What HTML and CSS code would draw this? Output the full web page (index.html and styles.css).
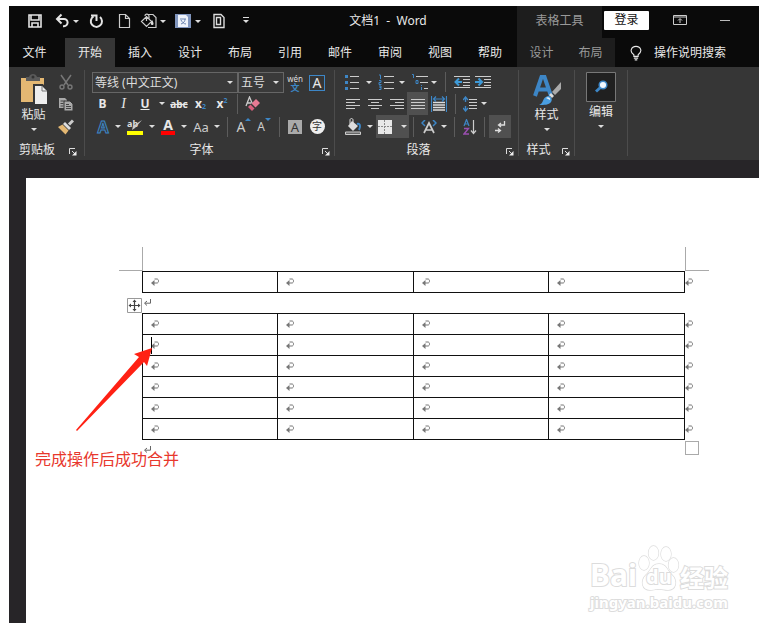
FILE: index.html
```html
<!DOCTYPE html>
<html lang="zh-CN">
<head>
<meta charset="utf-8">
<title>文档1 - Word</title>
<link rel="stylesheet" href="styles.css">
</head>
<body>
<svg class="defs" aria-hidden="true">
  <symbol id="cell-mark" viewBox="0 0 9 9"><path d="M3.500 1h2.500c2 0 2 4 0 4H2" fill="none" stroke="#777"/><path d="M0 5l3.500-3v6z" fill="#777"/></symbol>
  <symbol id="para-mark" viewBox="0 0 9 9"><path d="M7.500 1v4.200H2M4 3L1.500 5.200 4 7.500" fill="none" stroke="#666"/></symbol>
  <symbol id="launch" viewBox="0 0 8 8"><path d="M.5 6V.5H6M3 3l3 3" fill="none" stroke="#ddd"/><path d="M7.500 3v4.500H3z" fill="#eee"/></symbol>
</svg>
<div class="window">
  <header class="titlebar">
    <div class="quick">
      <button aria-label="保存"><svg width="18" height="18" viewBox="0 0 18 18"><path d="M3 3h12v12H3zM5 3v5h8V3M6 15v-4h6v4" fill="none" stroke="#e4e4e4" stroke-width="1.600"/></svg></button>
      <button aria-label="撤消"><svg width="18" height="18" viewBox="0 0 18 18"><path d="M5 7h7a3.600 3.600 0 0 1 0 7.200H11M9.500 2.500L5 7l4.500 4.500" fill="none" stroke="#e4e4e4" stroke-width="2"/></svg><i class="caret"></i></button>
      <button aria-label="重复"><svg width="18" height="18" viewBox="0 0 18 18"><path d="M6.500 4.500A5.600 5.600 0 1 0 13 5M4 3.500h5.500V9" fill="none" stroke="#e4e4e4" stroke-width="2"/></svg></button>
      <button aria-label="新建"><svg width="18" height="18" viewBox="0 0 18 18"><path d="M6.500 2.500h6l4 4v9h-10zM12.500 2.500v4h4" fill="none" stroke="#ccc" stroke-width="1.200"/></svg></button>
      <button aria-label="底纹"><svg width="18" height="18" viewBox="0 0 18 18"><path d="M9 2.500h5l3 3v10H9M2.500 9.500l5-5 5 5-5 5zM7.500 4v5M6 4c0-3 4-2 4 0v3" fill="none" stroke="#ccc" stroke-width="1.200"/><path d="M13 8c2 3 2 5 0 5s-1-3 0-5z" fill="#ddd"/></svg><i class="caret"></i></button>
      <button aria-label="翻译"><svg width="18" height="18" viewBox="0 0 18 18"><path d="M1 2h16v14H1z" fill="#8095bd"/><path d="M4 3h8l2 2v10H4z" fill="#eef2fa"/><path d="M6 7h6M7 12c3-1 4-3 4-5M7 8c1 2 3 4 5 4" fill="none" stroke="#6b84b0"/></svg><i class="caret"></i></button>
      <button aria-label="页面"><svg width="18" height="18" viewBox="0 0 18 18"><path d="M5 2.500h7l3 3v10H5zM7.500 5.500h4v7h-4z" fill="none" stroke="#ddd" stroke-width="1.400"/></svg></button>
      <button class="more" aria-label="自定义快速访问工具栏"><i class="caret barred"></i></button>
    </div>
    <h1>文档1 &nbsp;-&nbsp; Word</h1>
    <div class="context-title">表格工具</div>
    <div class="controls">
      <button class="login">登录</button>
      <button aria-label="功能区显示选项"><svg width="14" height="12" viewBox="0 0 14 12"><path d="M.5 1.500h13v9H.5zM.5 3h13M7 9V5M5 6.500l2-2 2 2" fill="none" stroke="#ccc"/></svg></button>
      <button class="minimize" aria-label="最小化"><svg width="12" height="12" viewBox="0 0 12 12"><path d="M1 6.500h10" stroke="#bbb"/></svg></button>
    </div>
  </header>
  <nav class="tabs">
    <button class="file">文件</button>
    <button class="active">开始</button>
    <button>插入</button>
    <button>设计</button>
    <button>布局</button>
    <button>引用</button>
    <button>邮件</button>
    <button>审阅</button>
    <button>视图</button>
    <button>帮助</button>
    <div class="context-tabs"><button>设计</button><button>布局</button></div>
    <button class="tell"><svg width="12" height="16" viewBox="0 0 14 18"><path d="M4.500 13v-2C1 8.500 1 6.500 1.500 5c1.500-5 9.500-5 11 0 .5 1.500 0 3.500-3 6v2zM4.500 15h5M5.500 17h3" fill="none" stroke="#e8e8e8" stroke-width="1.300"/></svg>操作说明搜索</button>
  </nav>

  <section class="ribbon" aria-label="功能区">
    <div class="group clip">
      <div class="clip-body">
        <button class="big">
          <svg width="28" height="31" viewBox="0 0 28 31"><path d="M1 4h23v24H1z" fill="#e4b873"/><path d="M6 3h3c1-4 7-4 8 0h3v4H6z" fill="#5a5a5a"/><circle cx="13" cy="3" r="1.500" fill="#333"/><path d="M13 10h10l5 6v15H13z" fill="#363636"/><path d="M15 12h7l5 5v13H15z" fill="#eee"/><path d="M22 12v5h5" fill="none" stroke="#777"/></svg>
          <span>粘贴</span><i class="caret"></i>
        </button>
        <div class="clip-small">
          <button aria-label="剪切"><svg width="16" height="16" viewBox="0 0 16 16"><path d="M3 1l7 10M13 1L6 11" stroke="#777" stroke-width="1.500"/><circle cx="4" cy="13" r="2" fill="none" stroke="#777" stroke-width="1.400"/><circle cx="12" cy="13" r="2" fill="none" stroke="#777" stroke-width="1.400"/></svg></button>
          <button aria-label="复制"><svg width="16" height="16" viewBox="0 0 16 16"><path d="M1 2h6l2 2v8H1z" fill="#aaa"/><path d="M6 5h6l3 3v7H6z" fill="#aaa" stroke="#363636"/><path d="M2.500 5h4M2.500 7.500h3M2.500 10h3M8 8.500h3M8 10.500h5M8 12.500h5" stroke="#444"/></svg></button>
          <button aria-label="格式刷"><svg width="16" height="16" viewBox="0 0 16 16"><path d="M15 1.500L11 5.500" stroke="#ccc" stroke-width="3"/><path d="M7 3l6 6-2 2-6-6z" fill="#ddd"/><path d="M4.500 5.500l6 6-3 4L0 8z" fill="#e4b873"/></svg></button>
        </div>
      </div>
      <footer><span>剪贴板</span><button aria-label="剪贴板选项"><svg width="8" height="8"><use href="#launch"/></svg></button></footer>
    </div>

    <div class="group font">
      <div class="row font-1">
        <label class="combo"><select aria-label="字体"><option>等线 (中文正文)</option></select></label>
        <label class="combo"><select aria-label="字号"><option>五号</option></select></label>
        <button aria-label="拼音指南"><ruby>文<rt>wén</rt></ruby></button>
        <button aria-label="字符边框"><span class="boxed">A</span></button>
      </div>
      <div class="row font-2">
        <button class="bold">B</button>
        <button class="ital">I</button>
        <button class="under">U</button>
        <i class="caret"></i>
        <button class="strike">abc</button>
        <button class="script">x<sub>2</sub></button>
        <button class="script">x<sup>2</sup></button>
        <i class="sep"></i>
        <button aria-label="清除所有格式"><svg width="16" height="16" viewBox="0 0 16 16"><path d="M2 10L5.500 1l3 7M3 7h4" fill="none" stroke="#ccc" stroke-width="1.300"/><path d="M12 3l4 4-4.500 4.500-4-4z" fill="#e87a94"/><path d="M6.500 8.500l4 4-2.500 2.500-4-4z" fill="#d85f7d"/></svg></button>
      </div>
      <div class="row font-3">
        <button aria-label="文本效果"><span class="effect">A</span></button>
        <i class="caret"></i>
        <button aria-label="突出显示"><svg width="18" height="18" viewBox="0 0 18 18"><text x="1" y="9" class="hl-text">ab</text><path d="M16 2l-7 8-3 2 1-4z" fill="#ccc"/><path d="M1 13h16v4H1z" fill="#ff0"/></svg></button>
        <i class="caret"></i>
        <button class="color" aria-label="字体颜色">A</button>
        <i class="caret"></i>
        <button class="case">Aa</button>
        <i class="caret"></i>
        <i class="sep"></i>
        <button class="grow" aria-label="增大字号">A<i class="up"></i></button>
        <button class="grow shrink" aria-label="减小字号">A<i class="down"></i></button>
        <i class="sep"></i>
        <button aria-label="字符底纹"><span class="shade">A</span></button>
        <button aria-label="带圈字符"><span class="circled">字</span></button>
      </div>
      <footer><span>字体</span><button aria-label="字体选项"><svg width="8" height="8"><use href="#launch"/></svg></button></footer>
    </div>

    <div class="group para">
      <div class="row para-1">
        <button aria-label="项目符号"><svg width="14" height="16" viewBox="0 0 14 16"><path d="M5 2.500h9M5 8.500h9M5 14.500h9" stroke="#ccc"/><path d="M0 1h3v3H0zM0 7h3v3H0zM0 13h3v3H0z" fill="#3d86c6"/></svg></button>
        <i class="caret"></i>
        <button aria-label="编号"><svg width="16" height="16" viewBox="0 0 16 16"><path d="M6 2.500h10M6 8.500h10M6 14.500h10" stroke="#ccc"/><path d="M1 1h1.500v4M1 6.500h2v2H1v2h2.500M1 12h2v3.500H1M1.500 13.500H3" fill="none" stroke="#3d86c6"/></svg></button>
        <i class="caret"></i>
        <button aria-label="多级列表"><svg width="18" height="16" viewBox="0 0 18 16"><path d="M5 2.500h12M9 8.500h8M13 14.500h4" stroke="#ccc"/><path d="M1 .5h1.500V4M5 6.500h2v3H5zM10.500 11v1M10.500 13v3" fill="none" stroke="#3d86c6"/></svg></button>
        <i class="caret"></i>
        <i class="sep"></i>
        <button aria-label="减少缩进"><svg width="16" height="14" viewBox="0 0 16 14"><path d="M0 1.500h16M9 4.500h7M9 7.500h7M9 10.500h7M0 12.500h16" stroke="#ccc"/><path d="M8 7H2M5 3.500L1.500 7 5 10.500" fill="none" stroke="#3d9ad8" stroke-width="2"/></svg></button>
        <button aria-label="增加缩进"><svg width="16" height="14" viewBox="0 0 16 14"><path d="M0 1.500h16M9 4.500h7M9 7.500h7M9 10.500h7M0 12.500h16" stroke="#ccc"/><path d="M0 7h6M3.500 3.500L7 7l-3.500 3.500" fill="none" stroke="#3d9ad8" stroke-width="2"/></svg></button>
      </div>
      <div class="row para-2">
        <button aria-label="左对齐"><svg width="14" height="12" viewBox="0 0 14 12"><path d="M0 1.500h14M0 4.500h9M0 7.500h14M0 10.500h9" stroke="#ccc"/></svg></button>
        <button aria-label="居中"><svg width="14" height="12" viewBox="0 0 14 12"><path d="M0 1.500h14M3 4.500h8M0 7.500h14M3 10.500h8" stroke="#ccc"/></svg></button>
        <button aria-label="右对齐"><svg width="14" height="12" viewBox="0 0 14 12"><path d="M0 1.500h14M5 4.500h9M0 7.500h14M5 10.500h9" stroke="#ccc"/></svg></button>
        <button class="on" aria-label="两端对齐"><svg width="14" height="12" viewBox="0 0 14 12"><path d="M0 1.500h14M0 4.500h14M0 7.500h14M0 10.500h14" stroke="#ccc"/></svg></button>
        <button aria-label="分散对齐"><svg width="16" height="16" viewBox="0 0 16 16"><path d="M2 6.500h12M2 9h12M2 11.500h12M2 14h12" stroke="#ddd" stroke-width="1.400"/><path d="M.5 0v16M15.500 0v16M2 3h12M5 .5L2.500 3 5 5.500M11 .5L13.500 3 11 5.500" fill="none" stroke="#3d86c6" stroke-width="1.200"/></svg></button>
        <i class="sep"></i>
        <button aria-label="行距"><svg width="14" height="16" viewBox="0 0 14 16"><path d="M6 3.500h8M6 6.500h8M6 9.500h8M6 12.500h8" stroke="#ccc"/><path d="M2.500 1v5M2.500 10v5M0 4l2.500-3L5 4M0 12l2.500 3L5 12" fill="none" stroke="#3d86c6" stroke-width="1.400"/></svg></button>
        <i class="caret"></i>
      </div>
      <div class="row para-3">
        <button aria-label="底纹颜色"><svg width="18" height="18" viewBox="0 0 18 18"><path d="M4 8l4-5 6 5-5 5z" fill="#ddd"/><path d="M6 6V2c0-2 3-2 3 0v4" fill="none" stroke="#ddd"/><path d="M13 6c3-1 4 2 2 6" fill="none" stroke="#3d86c6" stroke-width="2"/><path d="M1.500 14h15v2.500h-15z" fill="#666" stroke="#ccc"/></svg></button>
        <i class="caret"></i>
        <button class="on borders" aria-label="边框"><svg width="14" height="14" viewBox="0 0 14 14"><path d="M0 0h14v14H0z" fill="#e8e8e8"/><path d="M6.500 0v14M0 6.500h14" stroke="#888" stroke-dasharray="2 1"/></svg><i class="caret"></i></button>
        <i class="sep"></i>
        <button aria-label="中文版式"><svg width="16" height="14" viewBox="0 0 16 14"><path d="M3 13L8 3l5 10M5 10h6" fill="none" stroke="#ccc" stroke-width="1.700"/><path d="M4 0L1 3l3 3M12 0l3 3-3 3" fill="none" stroke="#3d86c6" stroke-width="1.500"/></svg></button>
        <i class="caret"></i>
        <i class="sep"></i>
        <button aria-label="排序"><svg width="14" height="16" viewBox="0 0 14 16"><path d="M1 7l2.500-6.500L6 7M2 5h3" fill="none" stroke="#3d86c6" stroke-width="1.200"/><path d="M1 9.500h4.500L1 15h5" fill="none" stroke="#9a4fb0" stroke-width="1.400"/><path d="M10.500 1v13M8 11.500l2.500 3 2.500-3" fill="none" stroke="#ccc" stroke-width="1.200"/></svg></button>
        <i class="sep"></i>
        <button class="on" aria-label="显示编辑标记"><svg width="14" height="14" viewBox="0 0 14 14"><path d="M11.500 1v4H6M8 3L5.500 5 8 7M2 10.500h5M5 8.500l2.500 2-2.500 2" fill="none" stroke="#ddd" stroke-width="1.300"/></svg></button>
      </div>
      <footer><span>段落</span><button aria-label="段落选项"><svg width="8" height="8"><use href="#launch"/></svg></button></footer>
    </div>

    <div class="group styles">
      <div class="tall">
        <button class="big">
          <svg width="28" height="31" viewBox="0 0 28 31"><path d="M2 22L8.500 3h3L18 22M5 15.500h10" fill="none" stroke="#3d86c6" stroke-width="4"/><path d="M28 8v7l-6 6-3-3z" fill="#aaa"/><path d="M18 19l3 3-2 2-3-3z" fill="#ddd"/><path d="M6 31c5-1 3-8 9-9 3 0 5 3 3 6-2 3-7 3-12 3z" fill="#4a9ee0"/><path d="M13 24c2-2 5 0 4 2z" fill="#e8f2fb"/></svg>
          <span>样式</span><i class="caret"></i>
        </button>
      </div>
      <footer><span>样式</span><button aria-label="样式选项"><svg width="8" height="8"><use href="#launch"/></svg></button></footer>
    </div>

    <div class="group edit">
      <button class="big">
        <svg width="30" height="30" viewBox="0 0 30 30"><path d="M.5.5h29v29H.5z" fill="#202020" stroke="#777"/><path d="M10 19.500l5-4.500" stroke="#3d86c6" stroke-width="3"/><circle cx="17" cy="13" r="3.800" fill="#f2f8ff" stroke="#3d86c6" stroke-width="1.500"/></svg>
        <span>编辑</span><i class="caret"></i>
      </button>
    </div>
  </section>

  <main class="desk">
    <article class="paper">
      <div class="body">
        <i class="crop left"></i><i class="crop right"></i>
        <table class="grid" aria-label="表格 1"><tbody></tbody></table>
        <p class="line"><span class="move"><svg width="15" height="15" viewBox="0 0 15 15"><path d="M.5.5h14v14H.5z" fill="#fff" stroke="#999"/><path d="M7.500 3v9M3 7.500h9" stroke="#444" stroke-width="1.200"/><path d="M7.500 1.500l2 2.500h-4zM7.500 13.500l2-2.500h-4zM1.500 7.500l2.500-2v4zM13.500 7.500l-2.500-2v4z" fill="#444"/></svg></span><svg width="9" height="9"><use href="#para-mark"/></svg></p>
        <table class="grid" aria-label="表格 2"><tbody></tbody></table>
        <p class="line"><i class="resize"></i><svg width="9" height="9"><use href="#para-mark"/></svg></p>
        <i class="cursor"></i>
        <div class="note">
          <svg width="77" height="84" viewBox="0 0 77 84"><path d="M76 0L58 6l5 3L0 82l1 1L68 14l3 4z" fill="#ff2114"/></svg>
          <span>完成操作后成功合并</span>
        </div>
      </div>
      <aside class="mark">
        <div class="mark-top">
          <span class="bai">Bai</span>
          <span class="paw"><svg width="42" height="46" viewBox="0 0 42 46"><g fill="#fff" stroke="#dcdcdc" stroke-width="1.300"><ellipse cx="6" cy="18" rx="5" ry="7"/><ellipse cx="15.500" cy="8" rx="5" ry="7"/><ellipse cx="28" cy="9" rx="5" ry="7"/><ellipse cx="35.500" cy="20" rx="5" ry="7"/><path d="M21 19c-8 0-8 7-13 11-6 6-4 15 4 15 5 0 5-1 9-1s5 1 9 1c8 0 10-9 4-15-5-4-5-11-13-11z"/></g></svg><b>du</b></span>
          <span class="jing">经验</span>
        </div>
        <div class="url">jingyan.baidu.com</div>
      </aside>
    </article>
  </main>
</div>
<script src="tables.js"></script>
</body>
</html>
```
FILE: tables.js
```js
// Fill the document's tables with empty cells, each ending in a cell mark.
const mark = '<svg width="9" height="9"><use href="#cell-mark"/></svg>';
const row = '<tr>' + `<td>${mark}</td>`.repeat(4) + `<td class="end">${mark}</td></tr>`;
const counts = [1, 6];
document.querySelectorAll('.grid tbody').forEach((body, i) => {
  body.innerHTML = row.repeat(counts[i]);
});
```
FILE: styles.css
```css
* { box-sizing: border-box; }
body {
  margin: 0;
  padding: 6px 11px 6px 9px;
  background: #fff;
  font: 12px/18px "Noto Sans", "Noto Sans CJK SC", sans-serif;
  color: #e8e8e8;
}
button {
  display: flex;
  align-items: center;
  justify-content: center;
  margin: 0;
  padding: 0;
  border: 0;
  background: none;
  color: inherit;
  font: inherit;
}
svg { display: block; flex: none; }
p { margin: 0; }
.defs { position: absolute; width: 0; height: 0; }
.window {
  display: flex;
  flex-direction: column;
  min-height: calc(100vh - 12px);
  background: #272528;
}

.caret {
  width: 0;
  height: 0;
  border: 3px solid transparent;
  border-top-color: #ddd;
  border-bottom: 0;
}
.caret.barred { position: relative; }
.caret.barred::before {
  content: "";
  position: absolute;
  left: -3px;
  top: -6px;
  width: 6px;
  height: 1px;
  background: #ddd;
}
.sep { width: 1px; height: 20px; background: #5c5c5c; }

/* Title bar */
.titlebar {
  display: grid;
  grid-template-columns: 250px 1fr 85px 157px;
  height: 32px;
  background: #0a0a0a;
}
.quick { display: flex; align-items: center; gap: 8px; padding: 0 0 2px 17px; }
.quick button { gap: 3px; }
.quick .more { margin-left: 8px; }
h1 {
  margin: 0;
  font-size: 12px;
  font-weight: 400;
  line-height: 30px;
  text-align: center;
}
.context-title { background: #1d1d1d; color: #999; line-height: 30px; text-align: center; }
.controls { display: flex; align-items: center; gap: 24px; padding: 0 0 4px 2px; }
.minimize { margin-left: 8px; }
.login { width: 45px; height: 19px; background: #fff; color: #111; border-radius: 1px; }

/* Tabs */
.tabs { display: flex; height: 29px; background: #0a0a0a; }
.tabs button { width: 50px; }
.tabs .file { width: 51px; margin-right: 5px; }
.tabs .active { background: #363636; }
.context-tabs { display: flex; margin-left: 2px; background: #1d1d1d; color: #999; }
.context-tabs button { width: 49px; }
.tabs .tell { width: auto; gap: 12px; margin-left: 15px; }

/* Ribbon */
.ribbon { display: flex; height: 93px; padding: 3px 0 4px; background: #363636; }
.group {
  display: flex;
  flex-direction: column;
  padding-top: 2px;
  border-right: 1px solid #4c4c4c;
}
.clip { width: 76px; }
.font { width: 250px; padding-left: 7px; }
.para { width: 184px; padding-left: 8px; }
.styles { width: 56px; }
.edit { width: 53px; }
footer { display: flex; height: 18px; line-height: 24px; margin-top: auto; }
footer span { flex: 1; text-align: center; }
footer button { width: 16px; padding-top: 10px; }
.clip footer { margin-right: 3px; }
.font footer { margin-left: -7px; }
.para footer { margin-left: -8px; }

.clip-body { display: grid; grid-template-columns: 49px 16px; height: 66px; }
.clip-small { display: grid; grid-template-rows: 20px 23px 23px; align-items: center; }
.big {
  flex-direction: column;
  justify-content: flex-start;
  width: 100%;
  padding-top: 2px;
}
.big span { line-height: 20px; }
.big .caret { margin-top: 3px; }
.tall { height: 66px; }
.edit .big { padding-top: 0; }

.row { display: grid; height: 23px; align-items: center; justify-items: center; }
.font-1, .para-1 { height: 20px; }
.font-1 { grid-template-columns: 146px 46px 22px 22px; }
.font-2 { grid-template-columns: 21px 21px 22px 12px 22px 21px 22px 8px 22px; }
.font-3 { grid-template-columns: 22px 8px 26px 8px 24px 8px 26px 6px 14px 20px 20px 10px 22px 22px; }
.para-1 { grid-template-columns: 18px 16px 18px 14px 22px 6px 16px 18px 24px; }
.para-2 { grid-template-columns: 20px 23px 21px 21px 22px 10px 20px 8px; }
.para-3 { grid-template-columns: 20px 13px 33px 9px 21px 9px 13px 18px 10px 22px; }
.row .on { align-self: stretch; justify-self: stretch; background: #505050; }
.borders { gap: 9px; }

.combo { position: relative; width: 100%; height: 21px; }
.combo select {
  appearance: none;
  width: 100%;
  height: 21px;
  padding: 0 2px;
  border: 1px solid #666;
  border-radius: 0;
  background: #3a3a3a;
  color: #ddd;
  font: inherit;
}
.combo::after {
  content: "";
  position: absolute;
  right: 5px;
  top: 9px;
  border: 3px solid transparent;
  border-top-color: #ddd;
  border-bottom: 0;
}
ruby { display: grid; justify-items: center; color: #3d86c6; font-size: 9px; font-weight: 700; line-height: 9px; }
rt { display: block; grid-row: 1; color: #ddd; font-size: 8px; font-weight: 400; line-height: 9px; }
.boxed { width: 16px; height: 16px; border: 1px solid #3d86c6; font-size: 14px; line-height: 14px; }
.bold { font-weight: 700; }
.ital { font-family: "Liberation Serif", serif; font-style: italic; font-size: 14px; }
.under { font-weight: 700; text-decoration: underline; }
.strike { font-size: 10px; font-weight: 700; text-decoration: line-through; }
.script { font-weight: 700; }
.script sub, .script sup { font-size: 7px; line-height: 12px; color: #3d86c6; }
.script sub { align-self: flex-end; }
.script sup { align-self: flex-start; }
.effect { font-size: 16px; font-weight: 700; color: #363636; -webkit-text-stroke: 1px #3d86c6; }
.hl-text { font-size: 9px; font-weight: 700; fill: #ddd; }
.color { width: 14px; height: 16px; border-bottom: 4px solid #f00; font-size: 14px; font-weight: 700; line-height: 12px; }
.case { color: #ccc; font-size: 13px; }
.grow { align-items: flex-start; color: #ccc; font-size: 14px; }
.shrink { font-size: 12px; }
.up, .down { border: 3px solid transparent; }
.up { border-top: 0; border-bottom-color: #3d86c6; }
.down { border-bottom: 0; border-top-color: #3d86c6; }
.shade { width: 14px; height: 14px; background: #aaa; color: #333; font-size: 13px; line-height: 14px; }
.circled { width: 15px; height: 15px; border-radius: 50%; background: #eee; color: #333; font-size: 10px; line-height: 14px; }

/* Document */
.desk { display: flex; flex: 1; padding: 18px 0 0 17px; }
.paper { position: relative; flex: 1; padding: 93px 75px 0 116px; background: #fff; }
.body { position: relative; }
.crop { position: absolute; top: -24px; width: 24px; height: 24px; border-bottom: 1px solid #aaa; }
.crop.left { left: -23px; border-right: 1px solid #aaa; }
.crop.right { right: -25px; border-left: 1px solid #aaa; }
.grid { width: calc(100% + 12px); border-collapse: collapse; table-layout: fixed; }
.grid td { height: 21px; padding: 0 0 0 8px; border: 1px solid #111; }
.grid .end { width: 12px; padding-left: 0; border-width: 0 0 0 1px; }
.line { position: relative; height: 20px; padding: 5px 0 0 1px; }
.move { position: absolute; left: -15px; top: 5px; }
.resize { position: absolute; right: -15px; top: 1px; width: 14px; height: 14px; border: 1px solid #aaa; }
.cursor { position: absolute; left: 9px; top: 66px; width: 1px; height: 17px; background: #000; }
.note { position: absolute; left: -107px; top: 77px; color: #e8382d; font-size: 16px; line-height: 24px; white-space: nowrap; }
.note svg { margin: 0 0 15px 41px; }

.mark { position: absolute; right: 27px; bottom: 10px; width: 142px; color: #fff; }
.mark-top { display: flex; align-items: flex-end; height: 46px; }
.mark span, .url, .paw b { paint-order: stroke; -webkit-text-stroke: 2px #dcdcdc; }
.bai { width: 48px; font: 700 30px/32px "Noto Sans", sans-serif; }
.paw { position: relative; }
.paw b { position: absolute; left: 8px; top: 20px; font: 700 20px/24px "Noto Sans", sans-serif; }
.jing { font: 700 24px/28px "Noto Sans CJK SC", sans-serif; }
.url { font: 700 15px/22px "Noto Sans", sans-serif; }
```
